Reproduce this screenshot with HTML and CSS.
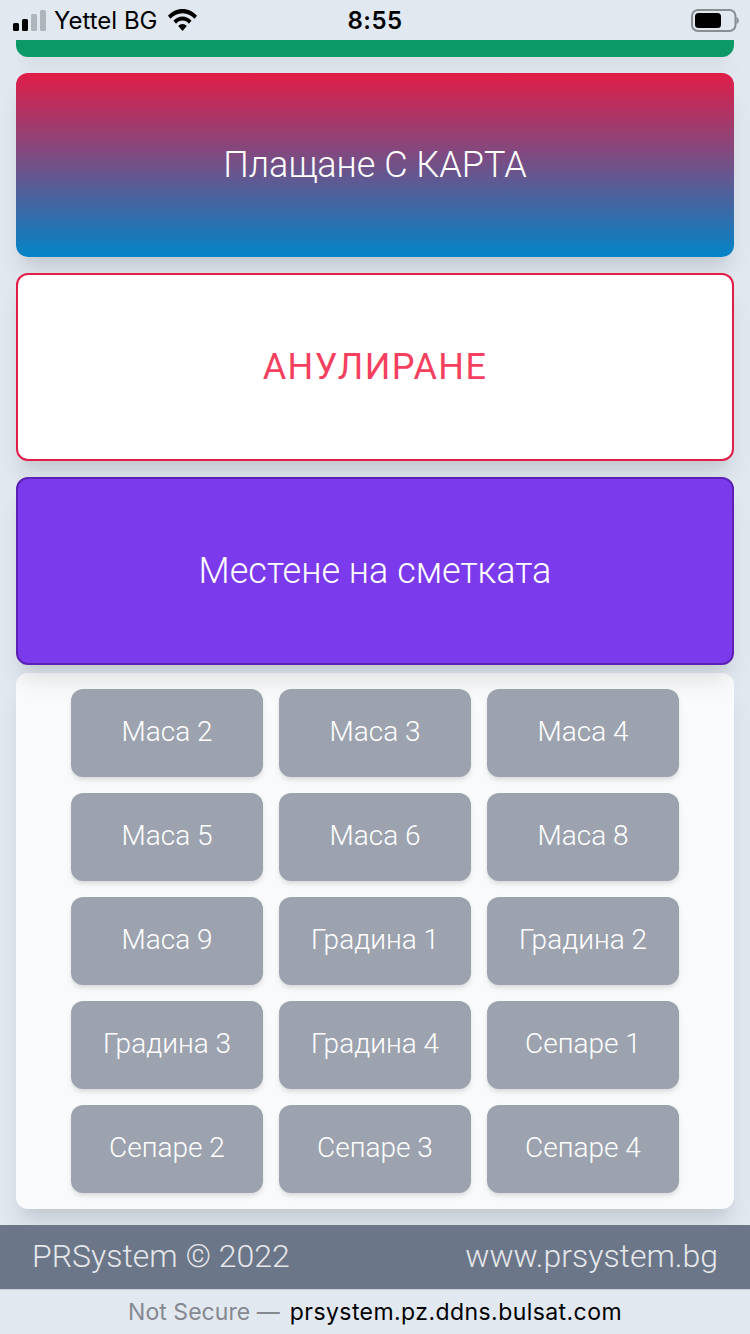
FILE: index.html
```html
<!DOCTYPE html>
<html lang="bg">
<head>
<meta charset="utf-8">
<title>PRSystem</title>
<link rel="stylesheet" href="styles.css">
</head>
<body>
<div class="statusbar">
  <div class="status-left">
    <svg class="signal" width="33" height="21" viewBox="0 0 33 21"><rect x="0" y="13" width="6" height="8" rx="1.500" fill="#000"/><rect x="9" y="9" width="6" height="12" rx="1.500" fill="#000"/><rect x="18" y="4" width="6" height="17" rx="1.500" fill="#b0b4bb"/><rect x="27" y="0" width="6" height="21" rx="1.500" fill="#b0b4bb"/></svg>
    <span class="carrier">Yettel BG</span>
    <svg class="wifi" width="29" height="22" viewBox="1 2 28 18.600" preserveAspectRatio="none"><path d="M15 2C9.500 2 4.600 4.200 1 7.800l2.400 2.500C6.400 7.400 10.500 5.600 15 5.600s8.600 1.800 11.600 4.700L29 7.800C25.400 4.200 20.500 2 15 2z" fill="#000"/><path d="M15 8.300c-3.400 0-6.500 1.400-8.700 3.600l2.500 2.500c1.600-1.600 3.800-2.600 6.200-2.600s4.600 1 6.200 2.600l2.500-2.500c-2.200-2.200-5.300-3.600-8.700-3.600z" fill="#000"/><path d="M15 14.600c-1.600 0-3.100.7-4.100 1.700L15 20.600l4.100-4.300c-1-1-2.500-1.700-4.100-1.700z" fill="#000"/></svg>
  </div>
  <div class="clock">8:55</div>
  <div class="status-right">
    <svg class="battery" width="48" height="23" viewBox="0 0 48 23"><rect x="1" y="1" width="43.500" height="21" rx="6" fill="none" stroke="#8a8d93" stroke-width="2"/><rect x="4" y="4" width="26" height="15" rx="3.500" fill="#000"/><path d="M45.500 8c1.300.4 2.300 1.900 2.300 3.500s-1 3.100-2.300 3.500z" fill="#8a8d93"/></svg>
  </div>
</div>
<main class="content">
  <div class="card card-green"></div>
  <button class="card card-gradient">Плащане С КАРТА</button>
  <button class="card card-cancel">АНУЛИРАНЕ</button>
  <button class="card card-move">Местене на сметката</button>
  <section class="tables">
    <button class="table">Маса 2</button>
    <button class="table">Маса 3</button>
    <button class="table">Маса 4</button>
    <button class="table">Маса 5</button>
    <button class="table">Маса 6</button>
    <button class="table">Маса 8</button>
    <button class="table">Маса 9</button>
    <button class="table">Градина 1</button>
    <button class="table">Градина 2</button>
    <button class="table">Градина 3</button>
    <button class="table">Градина 4</button>
    <button class="table">Сепаре 1</button>
    <button class="table">Сепаре 2</button>
    <button class="table">Сепаре 3</button>
    <button class="table">Сепаре 4</button>
  </section>
</main>
<footer class="footer">
  <span>PRSystem © 2022</span>
  <span>www.prsystem.bg</span>
</footer>
<div class="urlbar"><span class="not-secure">Not Secure —</span> <span class="host">prsystem.pz.ddns.bulsat.com</span></div>
</body>
</html>
```
FILE: styles.css
```css
* { box-sizing: border-box; }
html, body { margin: 0; padding: 0; }
body {
  width: 750px;
  height: 1334px;
  overflow: hidden;
  display: flex;
  flex-direction: column;
  background: #e2e8f0;
  font-family: Roboto, "Noto Sans", sans-serif;
}
.statusbar {
  height: 40px;
  flex: none;
  display: grid;
  grid-template-columns: 1fr auto 1fr;
  align-items: center;
  background: #e2e8f0;
  font-family: Inter, "Liberation Sans", sans-serif;
  color: #000;
  position: relative;
  z-index: 2;
}
.status-left { display: flex; align-items: center; padding-left: 13px; }
.signal { margin-right: 8px; }
.carrier { font-size: 24px; }
.wifi { margin-left: 10px; }
.clock { font-size: 24px; font-weight: 600; letter-spacing: 0.4px; }
.status-right { display: flex; justify-content: flex-end; padding-right: 11px; }
.content {
  flex: 1;
  min-height: 0;
  overflow: hidden;
  display: flex;
  flex-direction: column;
  padding: 0 16px 16px;
}
.card {
  display: block;
  width: 100%;
  flex: none;
  border: 0;
  border-radius: 12px;
  margin: 0 0 16px;
  padding: 0;
  font-family: Roboto, sans-serif;
  font-weight: 300;
  font-size: 36px;
  color: #fff;
  text-align: center;
  box-shadow: 0 20px 25px -5px rgba(0,0,0,.1), 0 10px 10px -5px rgba(0,0,0,.04);
}
.card-green { height: 17px; background: #0a9967; border-radius: 0 0 12px 12px; }
.card-gradient { height: 184px; background: linear-gradient(to bottom, #e11d48, #0284c7); }
.card-cancel { height: 188px; background: #fff; border: 2px solid #e11d48; color: #f43f5e; font-weight: 400; letter-spacing: 1.4px; }
.card-move { height: 188px; background: #7c3aed; border: 2px solid #5b21b6; margin-bottom: 8px; position: relative; z-index: 1; }
.tables {
  height: 536px;
  flex: none;
  background: #f9fafb;
  border-radius: 12px;
  padding: 16px 0;
  display: grid;
  grid-template-columns: repeat(3, 192px);
  grid-auto-rows: 88px;
  gap: 16px;
  justify-content: center;
  box-shadow: 0 20px 25px -5px rgba(0,0,0,.1), 0 10px 10px -5px rgba(0,0,0,.04);
}
.table {
  position: relative;
  z-index: 2;
  border: 0;
  padding: 0 0 4px;
  border-radius: 12px;
  background: #9ca3af;
  color: #fff;
  font-family: Roboto, sans-serif;
  font-weight: 300;
  font-size: 28px;
  box-shadow: 0 4px 6px -1px rgba(0,0,0,.1), 0 2px 4px -1px rgba(0,0,0,.06);
}
.footer {
  height: 64px;
  flex: none;
  display: flex;
  justify-content: space-between;
  align-items: center;
  padding: 0 32px 3px;
  background: #6b7688;
  color: #e5e7eb;
  font-weight: 300;
  font-size: 32px;
  position: relative;
  z-index: 1;
}
.urlbar {
  height: 45px;
  flex: none;
  display: flex;
  justify-content: center;
  align-items: center;
  gap: 10px;
  background: #e2e8f0;
  border-top: 1px solid #cbd0d8;
  font-family: Inter, "Liberation Sans", sans-serif;
  font-size: 23px;
}
.not-secure { color: #85888f; letter-spacing: 0.05px; }
.host { color: #000; letter-spacing: 0.43px; }
```
